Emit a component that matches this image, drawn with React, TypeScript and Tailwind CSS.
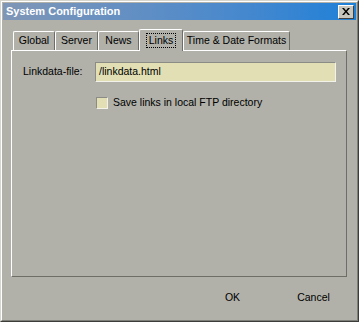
import React from 'react';

const tabs = [
  { label: 'Global', w: 'w-[42px]' },
  { label: 'Server', w: 'w-[43px]' },
  { label: 'News', w: 'w-[41px]' },
  { label: 'Links', w: 'w-[44px]', active: true },
  { label: 'Time & Date Formats', w: 'w-[107px]' },
];

function Tab({ label, w, active }: { label: string; w: string; active?: boolean }) {
  if (active) {
    return (
      <div
        className={`${w} h-[22px] -mb-px z-10 relative flex items-center justify-center bg-[#b1b1a9] border-t border-l border-t-white border-l-white border-r border-r-[#6e6e68] rounded-t-[2px]`}
      >
        <span className="px-[2px] leading-[13px] outline outline-1 outline-dotted outline-black">{label}</span>
      </div>
    );
  }
  return (
    <div
      className={`${w} h-[19px] flex items-center justify-center border-t border-l border-t-white border-l-white border-r border-r-[#6e6e68] rounded-t-[2px]`}
    >
      {label}
    </div>
  );
}

export default function App() {
  return (
    <div
      className="w-[359px] h-[322px] bg-[#b1b1a9] text-black text-[10.5px] border border-t-[#d6d6ce] border-l-[#d6d6ce] border-r-[#3c3c3a] border-b-[#3c3c3a]"
      style={{ fontFamily: '"Liberation Sans", Arial, sans-serif' }}
    >
      <div className="w-full h-full border border-t-white border-l-white border-r-[#7e7e78] border-b-[#7e7e78] flex flex-col">
        {/* Title bar */}
        <div className="mx-px mt-px h-[17px] flex items-center justify-between pl-[3px] pr-[2px] bg-gradient-to-r from-[#7f96b6] to-[#1a80d8]">
          <span className="text-white font-bold text-[11px]">System Configuration</span>
          <div className="w-[16px] h-[14px] bg-[#c6c6be] border border-t-white border-l-white border-r-[#404040] border-b-[#404040] flex items-center justify-center">
            <svg width="8" height="7" viewBox="0 0 8 7">
              <path d="M0 0h2l2 2.5L6 0h2L5 3.5 8 7H6L4 4.5 2 7H0l3-3.5z" fill="#000" />
            </svg>
          </div>
        </div>

        {/* Tabs */}
        <div className="mt-[9px] ml-[11px] flex items-end h-[21px]">
          {tabs.map((t) => (
            <Tab key={t.label} {...t} />
          ))}
        </div>

        {/* Panel */}
        <div className="ml-[9px] w-[336px] h-[227px] border border-t-white border-l-white border-r-[#6e6e68] border-b-[#6e6e68]">
          <div className="mt-[11px] flex items-center">
            <span className="w-[72px] ml-[11px]">Linkdata-file:</span>
            <div className="w-[241px] h-[20px] flex items-center pl-[3px] bg-[#e1dfb3] border border-t-[#8c8c86] border-l-[#8c8c86] border-r-[#f2f2ea] border-b-[#f2f2ea]">
              /linkdata.html
            </div>
          </div>
          <div className="mt-[13px] ml-[84px] flex items-center gap-[5px]">
            <div className="w-[12px] h-[12px] bg-[#e1dfb3] border border-t-[#8c8c86] border-l-[#8c8c86] border-r-[#f2f2ea] border-b-[#f2f2ea]" />
            <span>Save links in local FTP directory</span>
          </div>
        </div>

        {/* Buttons */}
        <div className="mt-[9px] ml-[193px] flex gap-[6px]">
          <button className="w-[75px] h-[23px] flex items-center justify-center">OK</button>
          <button className="w-[75px] h-[23px] flex items-center justify-center">Cancel</button>
        </div>
      </div>
    </div>
  );
}
